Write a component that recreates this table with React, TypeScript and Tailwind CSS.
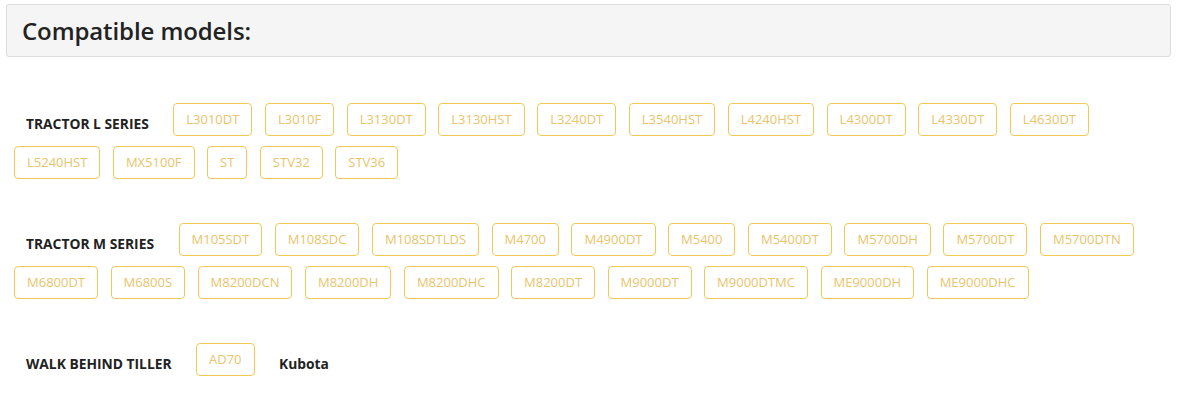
const sections = [
  {
    title: 'TRACTOR L SERIES',
    models: ['L3010DT', 'L3010F', 'L3130DT', 'L3130HST', 'L3240DT', 'L3540HST', 'L4240HST', 'L4300DT', 'L4330DT', 'L4630DT', 'L5240HST', 'MX5100F', 'ST', 'STV32', 'STV36'],
  },
  {
    title: 'TRACTOR M SERIES',
    models: ['M105SDT', 'M108SDC', 'M108SDTLDS', 'M4700', 'M4900DT', 'M5400', 'M5400DT', 'M5700DH', 'M5700DT', 'M5700DTN', 'M6800DT', 'M6800S', 'M8200DCN', 'M8200DH', 'M8200DHC', 'M8200DT', 'M9000DT', 'M9000DTMC', 'ME9000DH', 'ME9000DHC'],
  },
  {
    title: 'WALK BEHIND TILLER',
    models: ['AD70'],
    brand: 'Kubota',
  },
]

export default function App() {
  return (
    <div className="bg-white w-[1177px] h-[397px] pt-[4px] font-['Open_Sans',sans-serif]">
      <div className="mx-[6px] h-[53px] flex items-center pl-[15px] bg-[#f5f5f5] border border-[#dcdcdc] rounded-[3px]">
        <h1 className="text-[24px] font-semibold text-[#222] tracking-[-0.1px]">Compatible models:</h1>
      </div>

      {sections.map((sec, i) => (
        <div key={sec.title} className={`px-[14px] flex flex-wrap gap-x-[12.5px] gap-y-[10px] ${i === 0 ? 'mt-[46px]' : 'mt-[44px]'}`}>
          <span className="h-[33px] flex items-center pt-[9px] pl-3 pr-3 text-[13.8px] font-bold text-[#222]">
            {sec.title}
          </span>
          {sec.models.map(m => (
            <span
              key={m}
              className="h-[33px] px-[12px] flex items-center border border-[#f0ca55] rounded-[4px] text-[13px] text-[#e9c46c]"
            >
              {m}
            </span>
          ))}
          {sec.brand && (
            <span className="h-[33px] flex items-center pt-[9px] pl-3 text-[13.8px] font-bold text-[#222]">
              {sec.brand}
            </span>
          )}
        </div>
      ))}
    </div>
  )
}
